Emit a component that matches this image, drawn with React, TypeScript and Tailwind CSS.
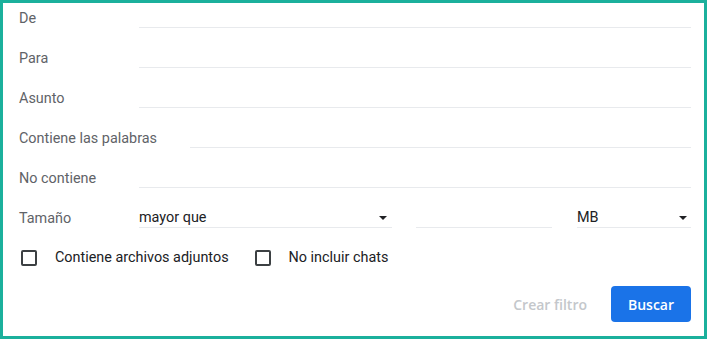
import React from "react";

function Caret() {
  return (
    <svg width="8" height="4" viewBox="0 0 8 4" className="shrink-0">
      <path d="M0 0 L8 0 L4 4 Z" fill="#202124" />
    </svg>
  );
}

function FieldRow({ label, labelW = "w-[120px]" }: { label: string; labelW?: string }) {
  return (
    <div className="flex h-[20px] items-center">
      <span className={`${labelW} shrink-0 pt-[1px] text-[14.4px] leading-[20px] text-[#5f6368]`}>{label}</span>
      <div className="h-[20px] flex-1 border-b border-[#e8eaed]" />
    </div>
  );
}

function Check({ label }: { label: string }) {
  return (
    <label className="flex items-center">
      <span className="ml-[2px] h-[16px] w-[16px] rounded-[2px] border-2 border-[#3c4043]" />
      <span className="ml-[18px] text-[14.4px] leading-[20px] text-[#202124]">{label}</span>
    </label>
  );
}

export default function App() {
  return (
    <div
      className="h-[339px] w-[707px] border-[3px] border-[#1bb09c] bg-white pl-[16px] pr-[13px] pt-[5px]"
      style={{ fontFamily: "Roboto, 'Liberation Sans', sans-serif" }}
    >
      <div className="flex flex-col gap-[20px]">
        <FieldRow label="De" />
        <FieldRow label="Para" />
        <FieldRow label="Asunto" />
        <FieldRow label="Contiene las palabras" labelW="w-[171px]" />
        <FieldRow label="No contiene" />
        <div className="flex h-[20px] items-center">
          <span className="w-[120px] shrink-0 pt-[1px] text-[14.4px] leading-[20px] text-[#5f6368]">Tamaño</span>
          <div className="flex h-[20px] w-[253px] items-center justify-between border-b border-[#e8eaed] pr-[5px]">
            <span className="pt-[1px] text-[14.4px] text-[#202124]">mayor que</span>
            <Caret />
          </div>
          <div className="ml-[24px] h-[20px] w-[136px] border-b border-[#e8eaed]" />
          <div className="ml-[25px] flex h-[20px] flex-1 items-center justify-between border-b border-[#e8eaed] pr-[4px]">
            <span className="pt-[1px] text-[14.4px] text-[#202124]">MB</span>
            <Caret />
          </div>
        </div>
        <div className="flex h-[20px] items-center gap-[24px]">
          <Check label="Contiene archivos adjuntos" />
          <Check label="No incluir chats" />
        </div>
      </div>
      <div
        className="mt-[18px] flex items-center justify-end"
        style={{ fontFamily: "'Open Sans', Roboto, sans-serif" }}
      >
        <button type="button" className="h-[36px] px-[24px] text-[14px] font-semibold text-[#c4c7cb]">
          Crear filtro
        </button>
        <button
          type="button"
          className="h-[36px] w-[80px] rounded-[4px] bg-[#1a73e8] text-[14px] font-semibold text-white"
        >
          Buscar
        </button>
      </div>
    </div>
  );
}
